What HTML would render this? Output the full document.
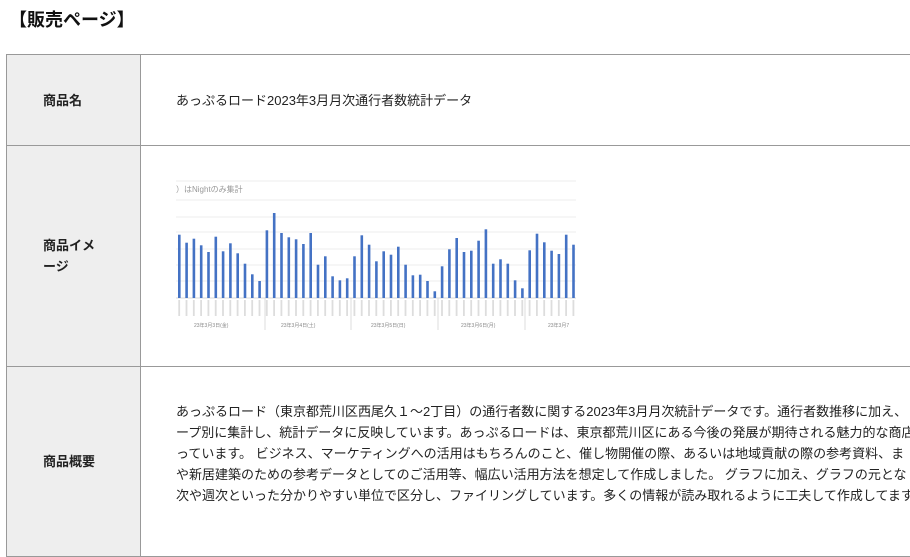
<!DOCTYPE html>
<html><head><meta charset="utf-8"><style>
body{margin:0;width:910px;height:500px;overflow:hidden;background:#fff;font-family:"Liberation Sans","Noto Sans CJK JP",sans-serif;color:#222}
h1{position:absolute;left:9px;top:6px;margin:0;font-size:18px;font-weight:bold;color:#111}
table{position:absolute;left:6px;top:54px;border-collapse:collapse;width:1000px}
td{border:1px solid #999;font-size:13px;vertical-align:middle}
th{border:1px solid #999;background:#eee;font-size:13px;font-weight:bold;text-align:left;padding:0 36px;width:61px;line-height:21px;vertical-align:middle}
td{padding:0 0 0 35px;white-space:nowrap;line-height:21px}
</style></head><body>
<h1>【販売ページ】</h1>
<table>
<tr style="height:91px"><th>商品名</th><td>あっぷるロード2023年3月月次通行者数統計データ</td></tr>
<tr style="height:221px"><th>商品イメージ</th><td style="padding:0;position:relative">
<svg id="c" width="420" height="160" style="position:absolute;left:35px;top:34px" xmlns="http://www.w3.org/2000/svg"></svg>
</td></tr>
<tr style="height:190px"><th>商品概要</th><td style="vertical-align:top;padding-top:34px">あっぷるロード（東京都荒川区西尾久１～2丁目）の通行者数に関する2023年3月月次統計データです。通行者数推移に加え、<br>ープ別に集計し、統計データに反映しています。あっぷるロードは、東京都荒川区にある今後の発展が期待される魅力的な商店<br>っています。 ビジネス、マーケティングへの活用はもちろんのこと、催し物開催の際、あるいは地域貢献の際の参考資料、ま<br>や新居建築のための参考データとしてのご活用等、幅広い活用方法を想定して作成しました。 グラフに加え、グラフの元とな<br>次や週次といった分かりやすい単位で区分し、ファイリングしています。多くの情報が読み取れるように工夫して作成してます</td></tr>
</table>
<script>
var h=[63.3,55.3,59.3,52.7,46,61.3,46.7,54.7,44.7,34.3,23.7,17,67.7,85,65,60.7,58.7,54,65,33.3,41.7,21.7,17.7,19.7,41.7,62.7,53.3,36.7,46.7,43.3,51.3,33.3,22.7,23.3,17,6.7,31.7,48.7,60,46,47.3,57.3,68.7,34.3,38.7,34.3,17.7,9.7,47.7,64.3,55.7,47.3,44,63.3,53.3];
var s='<text x="0" y="12" font-size="8" fill="#999" font-family="Liberation Sans,Noto Sans CJK JP,sans-serif">）はNightのみ集計</text>';
s+='<line x1="0" x2="400" y1="1" y2="1" stroke="#eee"/>';
[20,37,52,69,85,101].forEach(function(y){s+='<line x1="0" x2="400" y1="'+y+'" y2="'+y+'" stroke="#e6e6e6" stroke-width="0.8"/>'});
s+='<line x1="0" x2="400" y1="118" y2="118" stroke="#ccc" stroke-width="0.8"/>';
h.forEach(function(v,i){var x=2+i*7.3;s+='<rect x="'+x.toFixed(1)+'" y="'+(118-v).toFixed(1)+'" width="2.6" height="'+v+'" fill="#4472c4"/>';
s+='<rect x="'+(x+0.3).toFixed(1)+'" y="120" width="1.8" height="16" fill="#bbb" opacity="0.5"/>';});
[89,175,262,349].forEach(function(x){s+='<line x1="'+x+'" x2="'+x+'" y1="118" y2="150" stroke="#ddd"/>'});
[[18,'23年3月3日(金)'],[105,'23年3月4日(土)'],[195,'23年3月5日(日)'],[285,'23年3月6日(月)'],[372,'23年3月7']].forEach(function(a){s+='<text x="'+a[0]+'" y="147" font-size="5" fill="#888">'+a[1]+'</text>'});
document.getElementById('c').innerHTML=s;
</script>
</body></html>
